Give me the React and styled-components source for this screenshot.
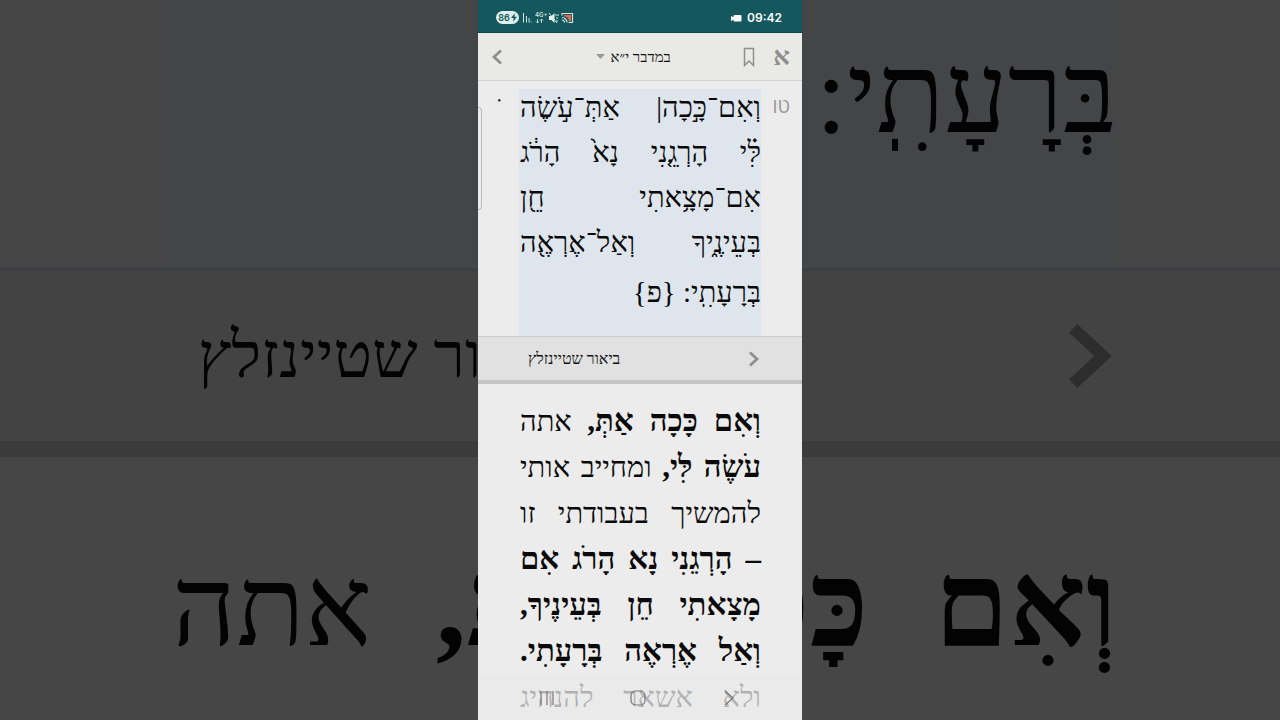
import React from 'react';
import styled, { createGlobalStyle } from 'styled-components';

const verseLines = [
    'וְאִם־כָּ֣כָה| אַתְּ־עֹ֣שֶׂה',
    'לִּ֗י הָרְגֵ֤נִי נָא֙ הָרֹ֔ג',
    'אִם־מָצָ֥אתִי חֵ֖ן',
    'בְּעֵינֶ֑יךָ וְאַל־אֶרְאֶ֖ה',
];

function Chevron({ size, flip }) {
    return (
        <svg width={size} height={size} viewBox="0 0 16 16" fill="none" stroke="currentColor" strokeWidth="2.8">
            <path d={flip ? 'M11 1.5 4 8l7 6.5' : 'M5 1.5 12 8l-7 6.5'} />
        </svg>
    );
}

function StatusIcons() {
    return (
        <svg width="54" height="14" viewBox="0 0 54 14" fill="none" stroke="#cfe3e2">
            {/* signal */}
            <path d="M2.5 2v9.500M5.5 5v6.500M8 7v4.500" strokeWidth="1" />
            <path d="M9.5 11h1" />
            {/* arrows under 4G+ */}
            <path d="M16.5 8v4M15 10.5l1.5 1.5 1.5-1.5M20.5 12V8M19 9.5 20.5 8 22 9.5" strokeWidth=".9" />
            {/* muted speaker */}
            <path d="M28 5h2.500l3-3v10l-3-3H28z" fill="#e8f3f2" stroke="none" />
            <path d="M28 2l8 10" strokeWidth="1" />
            <path d="M35 3v2M37 3v2M35 7h2M36 9v2" strokeWidth="1" />
            {/* cast */}
            <path d="M41 4.500V2.500h10.500v9h-4" strokeWidth="1.200" />
            <path d="M43 4h7v6.500H48c0-3-2-5-5-5z" fill="#e8674f" stroke="none" />
            <path d="M41 6.500a5 5 0 0 1 5 5M41 9a2.500 2.500 0 0 1 2.500 2.500" strokeWidth="1.200" />
        </svg>
    );
}

function Backdrop() {
    return (
        <BackdropStyled aria-hidden="true" dir="rtl">
            <div className="verse">
                <p>בְּרָעָתִֽי:</p>
            </div>
            <div className="bar">
                <Chevron size={68} />
                <span>ביאור שטיינזלץ</span>
            </div>
            <div className="commentary">
                <p><b>וְאִם כָּכָה אַתְּ,</b> אתה</p>
            </div>
        </BackdropStyled>
    );
}

function App() {
    return (
        <Stage>
            <GlobalStyle />
            <Backdrop />
            <Phone dir="rtl" lang="he">
                <StatusBar dir="ltr">
                    <Battery>86
                        <svg width="6" height="9" viewBox="0 0 7 10"><path d="M4.500 0 0 5.500h3L2.500 10 7 4H4z" fill="#14575c" /></svg>
                    </Battery>
                    <Network>
                        <StatusIcons />
                        <small>4G+</small>
                    </Network>
                    <Clock>
                        <svg width="11" height="8" viewBox="0 0 11 8" fill="#fff"><rect x="2.500" y="1" width="8" height="6.500" rx="1" /><path d="M0 2l3 1.500v2L0 7z" /></svg>
                        09:42
                    </Clock>
                </StatusBar>
                <Header>
                    <IconButton aria-label="אפשרויות תצוגה"><Aleph>א</Aleph></IconButton>
                    <IconButton aria-label="סימנייה">
                        <svg width="12" height="20" viewBox="0 0 12 20" fill="none" stroke="#8f8f8f" strokeWidth="1.500">
                            <path d="M1.500 1.500h9v17L6 14l-4.500 4.500z" />
                        </svg>
                    </IconButton>
                    <Title>
                        במדבר י״א
                        <svg width="9" height="5" viewBox="0 0 9 5"><path d="M0 0h9L4.500 5z" fill="#999" /></svg>
                    </Title>
                    <IconButton aria-label="חזרה"><Chevron size={16} flip /></IconButton>
                </Header>
                <Reader>
                    <VerseNumber>טו</VerseNumber>
                    <Verse>
                        {verseLines.map((line) => <Line key={line}>{line}</Line>)}
                        <Line $last>בְּרָעָתִֽי: {'{פ}'}</Line>
                    </Verse>
                    <Gutter>•</Gutter>
                    <ScrollThumb />
                </Reader>
                <CommentaryBar>
                    <Chevron size={16} />
                    <span>ביאור שטיינזלץ</span>
                </CommentaryBar>
                <Commentary>
                    <Line><b>וְאִם כָּכָה אַתְּ,</b> אתה</Line>
                    <Line><b>עֹשֶׂה לִּי,</b> ומחייב אותי</Line>
                    <Line>להמשיך בעבודתי זו</Line>
                    <Line><b>– הָרְגֵנִי נָא הָרֹג אִם</b></Line>
                    <Line><b>מָצָאתִי חֵן בְּעֵינֶיךָ,</b></Line>
                    <Line><b>וְאַל אֶרְאֶה בְּרָעָתִי.</b></Line>
                    <Line>ולא אשאר להנהיג</Line>
                </Commentary>
                <NavBar dir="ltr">
                    <NavButton aria-label="Recents">
                        <svg width="16" height="16" viewBox="0 0 16 16" stroke="#777" strokeWidth="1.200"><path d="M2 1v14M8 1v14M14 1v14" /></svg>
                    </NavButton>
                    <NavButton aria-label="Home">
                        <svg width="16" height="16" viewBox="0 0 16 16" fill="none" stroke="#777" strokeWidth="1.200"><rect x="1" y="1" width="14" height="14" rx="4.500" /></svg>
                    </NavButton>
                    <NavButton aria-label="Back">
                        <svg width="16" height="16" viewBox="0 0 16 16" fill="none" stroke="#777" strokeWidth="1.200"><path d="M4 1l8 7-8 7" /></svg>
                    </NavButton>
                </NavBar>
            </Phone>
        </Stage>
    );
}

const GlobalStyle = createGlobalStyle`
    *{
        box-sizing: border-box;
    }
    body{
        margin: 0;
        background: #464646;
        font-family: "Liberation Serif", serif;
    }
    p{
        margin: 0;
    }
    svg{
        display: block;
        flex-shrink: 0;
    }
    button{
        border: 0;
        padding: 0;
        background: none;
        color: inherit;
        font-family: inherit;
    }
`;

const Stage = styled.main`
    display: grid;
    grid-template: 100vh / 1fr;
    justify-items: center;
    overflow: hidden;
    > *{
        grid-area: 1 / 1;
    }
`;

const BackdropStyled = styled.div`
    width: 100%;
    overflow: hidden;
    display: flex;
    flex-direction: column;
    background: #464646;
    color: #030303;
    font-size: 112px;
    line-height: 180px;
    white-space: nowrap;
    .verse{
        height: 268px;
        margin: 0 163px;
        padding-top: 4px;
        background: #434547;
    }
    .bar{
        display: flex;
        align-items: center;
        justify-content: space-between;
        height: 189px;
        padding: 0 160px 0 198px;
        border-top: 3px solid #3d3e3f;
        border-bottom: 16px solid #3b3b3b;
        background: #434343;
        font-size: 64px;
        svg{
            color: #2d2d2d;
        }
    }
    .commentary{
        margin: 0 163px 0 172px;
        padding-top: 58px;
        text-align-last: justify;
        b{
            font-size: 120px;
        }
    }
`;

const Phone = styled.div`
    position: relative;
    height: 100vh;
    aspect-ratio: 9 / 20;
    display: flex;
    flex-direction: column;
    overflow: hidden;
    background: #ececec;
    color: #0a0a0a;
`;

const StatusBar = styled.div`
    display: flex;
    align-items: center;
    flex-shrink: 0;
    height: 33px;
    padding: 3px 20px 0 18px;
    background: #14575c;
    border-bottom: 1px solid #0c474c;
    font-family: Inter, sans-serif;
`;

const Battery = styled.span`
    display: flex;
    align-items: center;
    justify-content: center;
    gap: 1px;
    width: 23px;
    height: 13px;
    border-radius: 7px;
    background: #deeeed;
    color: #14575c;
    font-size: 9px;
    font-weight: 600;
`;

const Network = styled.span`
    position: relative;
    margin-left: 2px;
    small{
        position: absolute;
        left: 14px;
        top: 0;
        font-size: 6px;
        line-height: 8px;
        font-weight: 600;
        color: #cfe3e2;
    }
`;

const Clock = styled.time`
    display: flex;
    align-items: center;
    gap: 5px;
    margin-left: auto;
    color: #fff;
    font-size: 12px;
    font-weight: 600;
`;

const Header = styled.header`
    display: flex;
    align-items: center;
    flex-shrink: 0;
    height: 48px;
    padding: 0 12px;
    background: #e9e9e5;
    border-bottom: 1px solid #d0d0d0;
`;

const IconButton = styled.button`
    display: flex;
    align-items: center;
    justify-content: center;
    min-width: 16px;
    height: 32px;
    color: #8f8f8f;
    & + &{
        margin-right: 16px;
    }
`;

const Aleph = styled.span`
    font-size: 26px;
    line-height: 32px;
    font-weight: bold;
`;

const Title = styled.button`
    flex: 1;
    display: flex;
    align-items: center;
    justify-content: center;
    gap: 5px;
    padding-left: 20px;
    color: #111;
    font-size: 15px;
    line-height: 20px;
`;

const Reader = styled.section`
    position: relative;
    display: grid;
    grid-template-columns: 41px 1fr 41px;
    flex-shrink: 0;
    height: 255px;
    padding-top: 8px;
`;

const Line = styled.p`
    padding-left: 1px;
    white-space: nowrap;
    text-align-last: ${(props) => (props.$last ? 'right' : 'justify')};
    line-height: ${(props) => (props.$last ? '46px' : 'inherit')};
`;

const Verse = styled.div`
    display: flex;
    flex-direction: column;
    gap: 8px;
    background: #dee5ed;
    font-size: 29px;
    line-height: 37px;
`;

const VerseNumber = styled.span`
    padding: 7px 12px 0 0;
    color: #999;
    font-family: "Open Sans", "DejaVu Sans", sans-serif;
    font-size: 20px;
    line-height: 20px;
`;

const Gutter = styled.span`
    padding-right: 18px;
    font-size: 10px;
    line-height: 24px;
`;

const ScrollThumb = styled.div`
    position: absolute;
    left: 0;
    top: 26px;
    width: 4px;
    height: 103px;
    border: 1px solid #bbb;
    border-left: 0;
    border-radius: 0 4px 4px 0;
`;

const CommentaryBar = styled.button`
    display: flex;
    align-items: center;
    justify-content: space-between;
    flex-shrink: 0;
    height: 48px;
    padding: 0 41px 0 50px;
    border-top: 1px solid #cbcbcb;
    border-bottom: 4px solid #c5c5c5;
    background: #e1e1e1;
    font-size: 16px;
    svg{
        color: #8f8f8f;
    }
    span{
        color: #111;
    }
`;

const Commentary = styled.section`
    padding: 14px 41px 0;
    font-size: 29px;
    line-height: 46px;
    b{
        font-size: 31px;
        line-height: 40px;
    }
`;

const NavBar = styled.nav`
    position: absolute;
    left: 0;
    right: 0;
    bottom: 0;
    display: flex;
    justify-content: space-between;
    height: 46px;
    padding: 0 65px 0 61px;
    background: rgba(233, 233, 233, 0.75);
`;

const NavButton = styled.button`
    display: flex;
    align-items: center;
    height: 48px;
`;

export default App;
